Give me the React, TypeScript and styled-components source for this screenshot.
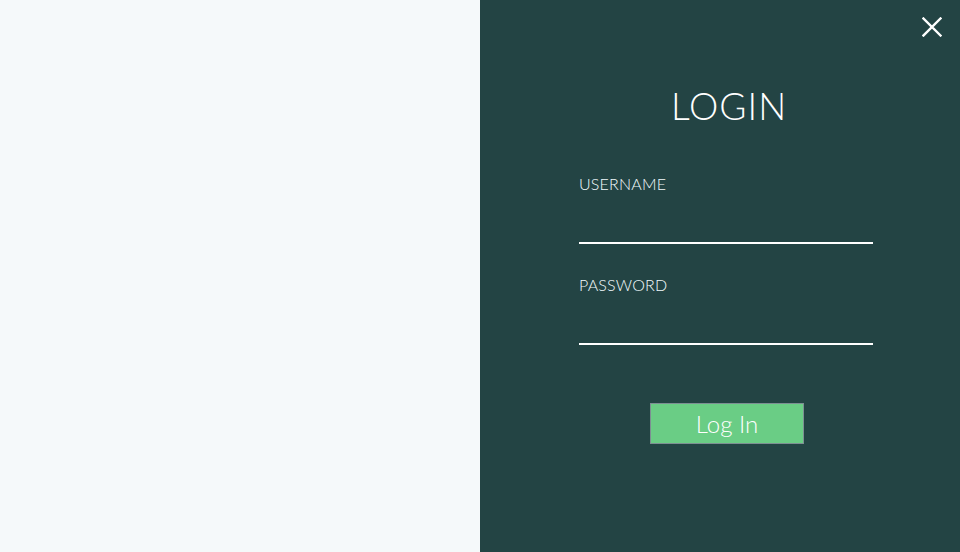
import React from "react";
import styled, { createGlobalStyle } from "styled-components";

const Global = createGlobalStyle`
  html, body { margin: 0; padding: 0; height: 100%; }
  body { font-family: "Lato", "Open Sans", sans-serif; }
  #root { height: 100%; }
`;

const Page = styled.div`
  display: grid;
  grid-template-columns: 480px 480px;
  width: 960px;
  height: 552px;
`;

const LeftPane = styled.div`
  background: #f5f9fa;
`;

const RightPane = styled.div`
  position: relative;
  background: #234444;
  display: flex;
  flex-direction: column;
  align-items: center;
  padding-left: 12px;
  box-sizing: border-box;
`;

const CloseButton = styled.button`
  position: absolute;
  top: 15px;
  right: 16px;
  width: 24px;
  height: 24px;
  padding: 0;
  border: none;
  background: transparent;
  cursor: pointer;
  display: flex;
  align-items: center;
  justify-content: center;
`;

const Title = styled.h1`
  margin: 86px 0 0 6px;
  font-weight: 300;
  font-size: 37px;
  line-height: 40px;
  color: #ffffff;
  letter-spacing: 1px;
`;

const Form = styled.form`
  width: 294px;
  display: flex;
  flex-direction: column;
  margin-top: 48px;
`;

const Field = styled.div<{ $gap?: number }>`
  display: flex;
  flex-direction: column;
  margin-top: ${(p) => p.$gap ?? 0}px;
`;

const Label = styled.label`
  font-size: 16px;
  line-height: 20px;
  color: #f2fafd;
  font-weight: 300;
  letter-spacing: 0.2px;
`;

const Input = styled.input`
  margin-top: 28px;
  height: 20px;
  background: transparent;
  border: none;
  border-bottom: 2px solid #ffffff;
  color: #fff;
  outline: none;
  padding: 0;
  font-size: 16px;
`;

const Submit = styled.button`
  align-self: center;
  margin: 58px 0 0 2px;
  width: 154px;
  height: 41px;
  background: #6acd85;
  border: 1px solid #7d8f93;
  color: #ffffff;
  font-family: "Lato", "Open Sans", sans-serif;
  font-size: 24px;
  font-weight: 300;
  cursor: pointer;
`;

export default function App() {
  return (
    <>
      <Global />
      <Page>
        <LeftPane />
        <RightPane>
          <CloseButton aria-label="Close">
            <svg width="20" height="20" viewBox="0 0 20 20">
              <path d="M1.5 1.5 L18.5 18.5 M18.5 1.5 L1.5 18.5" stroke="#fff" strokeWidth="2.4" strokeLinecap="square" />
            </svg>
          </CloseButton>
          <Title>LOGIN</Title>
          <Form onSubmit={(e) => e.preventDefault()}>
            <Field>
              <Label>USERNAME</Label>
              <Input type="text" />
            </Field>
            <Field $gap={31}>
              <Label>PASSWORD</Label>
              <Input type="password" />
            </Field>
            <Submit type="submit">Log In</Submit>
          </Form>
        </RightPane>
      </Page>
    </>
  );
}
